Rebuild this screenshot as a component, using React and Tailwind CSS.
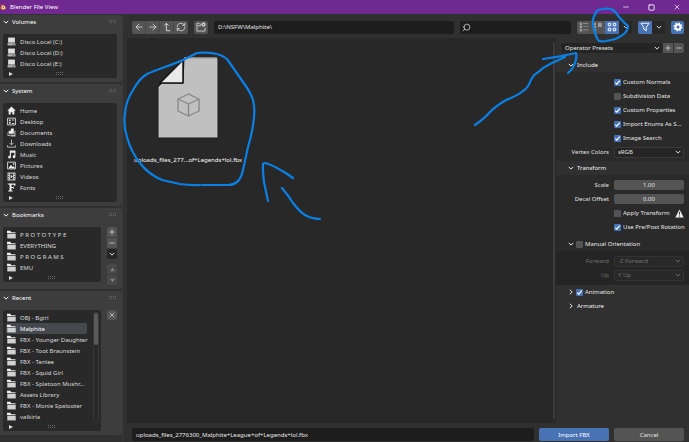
import { useState } from "react";
import { ArrowLeft, ArrowRight, RefreshCw, Search, X, Minus, Plus, Square } from "lucide-react";

function ChevronDown({ className = "" }) {
  return (
    <svg viewBox="0 0 8 8" className={`h-[6px] w-[6px] shrink-0 ${className}`} fill="none" stroke="currentColor" strokeWidth="1.3">
      <path d="M1 2.5 4 5.5 7 2.5" />
    </svg>
  );
}

function Grip() {
  return (
    <svg viewBox="0 0 8 4" className="h-[4px] w-[8px] shrink-0" fill="#6a6a6a">
      {[0, 2, 4, 6].map((x) => (
        <g key={x}>
          <rect x={x} y="0" width="1" height="1" />
          <rect x={x} y="2" width="1" height="1" />
        </g>
      ))}
    </svg>
  );
}

const drawings = {
  drive: (
    <>
      <path fill="#dedede" d="M2 1h12v9H2z" />
      <path fill="#b5b5b5" d="M1 11h14v4H1z" />
      <path fill="#333" d="M10 12.5h3v1h-3z" />
    </>
  ),
  home: <path fill="#eee" d="M8 1 0.5 8.5H3V15h3.5v-4h3v4H13V8.5h2.5z" />,
  desktop: (
    <>
      <path fill="none" stroke="#ddd" strokeWidth="1.6" d="M1 2h14v12H1z" />
      <path fill="#ddd" d="M3.5 4.5h3v3h-3zM3.5 9h3v3h-3zM8.5 4.5h4V6h-4zM9 10.5h4v2H9z" />
    </>
  ),
  documents: (
    <>
      <path fill="#eee" d="M7 1h5v9H3V5h4z" />
      <path fill="#bbb" d="M13 5h2v10H6v-3h7zM1 8h1v4h3v2H1z" />
    </>
  ),
  downloads: <path fill="none" stroke="#ccc" strokeWidth="1.5" d="M8 1v9M4.5 7 8 10.5 11.5 7M1 11v3.5h14V11" />,
  music: <path fill="#eee" d="M5 1h10v11a2.5 2.5 0 1 1-2-2.4V5H7v7.500a2.5 2.5 0 1 1-2-2.4z" />,
  pictures: (
    <>
      <path fill="none" stroke="#ddd" strokeWidth="1.6" d="M1 2h14v12H1z" />
      <path fill="#eee" d="M2.5 13 7 6.5l3 4L11.5 9l3 4zM10.5 4H13v2.500h-2.5z" />
    </>
  ),
  videos: (
    <>
      <path fill="#ddd" d="M1 1h14v14H1z" />
      <path fill="#333" d="M5 2.5h6v11H5zM2 3h1.5v2H2zM2 7h1.5v2H2zM2 11h1.5v2H2zM12.5 3H14v2h-1.5zM12.5 7H14v2h-1.5zM12.5 11H14v2h-1.5z" />
      <path fill="#eee" d="m6.5 5 4 3-4 3z" />
    </>
  ),
  fonts: <path fill="#eee" d="M1 1h14v4h-1.5L12 3H8v4.2h2.5L11 6h1v4.500h-1L10.5 9H8v4l2 .8V15H2v-1.2L4.500 13V3L1 2z" />,
  folder: (
    <>
      <path fill="#eee" d="M0 1.500h6L7.500 4H15v1.500H0z" />
      <path fill="#d2d2d2" d="M0.500 6.500h15V15h-15z" />
    </>
  ),
};

function Icon({ name }) {
  return (
    <svg viewBox="0 0 16 16" className="h-[9px] w-[9px] shrink-0">
      {drawings[name]}
    </svg>
  );
}

function BoxFooter() {
  return (
    <div className="grid h-[9px] grid-cols-3 items-center px-1">
      <svg viewBox="0 0 6 6" className="ml-[2px] h-[4px] w-[4px]" fill="#ddd">
        <path d="M0 0 6 3 0 6z" />
      </svg>
      <span className="justify-self-center">
        <Grip />
      </span>
    </div>
  );
}

function PlaceList({ items, scroll = false }) {
  return (
    <div className="min-w-0 flex-1 rounded-[2px] bg-[#292929] pt-[2px]">
      <div className="flex">
        <ul className="min-w-0 flex-1 px-[3px]">
          {items.map(([icon, label, selected]) => (
            <li key={label}>
              <button
                className={`flex h-[11px] w-full items-center gap-1 rounded-[2px] pl-[1px] text-left whitespace-nowrap ${
                  selected ? "bg-[#45484d] text-white" : "text-[#dadada]"
                }`}
              >
                <Icon name={icon} />
                <span>{label}</span>
              </button>
            </li>
          ))}
        </ul>
        {scroll && (
          <div className="mr-[2px] ml-[3px] w-[6px] rounded-full border border-[#383838]">
            <div className="h-8 rounded-full bg-[#5a5a5a]" />
          </div>
        )}
      </div>
      <BoxFooter />
    </div>
  );
}

function SidePanel({ title, children }) {
  return (
    <section className="rounded-r-[3px] bg-[#3d3d3d] pr-[5px] pb-1 pl-[3px]">
      <header className="mb-[5px] flex h-[14px] items-center justify-between">
        <button className="flex items-center gap-[3px] text-white">
          <ChevronDown />
          {title}
        </button>
        <Grip />
      </header>
      <div className="flex items-start gap-[6px]">{children}</div>
    </section>
  );
}

const smallButton = "flex h-[10px] w-[10px] items-center justify-center bg-[#545454] text-[#e6e6e6]";

function SideBar() {
  return (
    <aside className="flex w-[122px] shrink-0 flex-col gap-[2px] pt-[1px]">
      <SidePanel title="Volumes">
        <PlaceList
          items={[
            ["drive", "Disco Local (C:)"],
            ["drive", "Disco Local (D:)"],
            ["drive", "Disco Local (E:)"],
          ]}
        />
      </SidePanel>
      <SidePanel title="System">
        <PlaceList
          items={[
            ["home", "Home"],
            ["desktop", "Desktop"],
            ["documents", "Documents"],
            ["downloads", "Downloads"],
            ["music", "Music"],
            ["pictures", "Pictures"],
            ["videos", "Videos"],
            ["fonts", "Fonts"],
          ]}
        />
      </SidePanel>
      <SidePanel title="Bookmarks">
        <PlaceList
          items={[
            ["folder", "P R O T O T Y P E"],
            ["folder", "EVERYTHING"],
            ["folder", "P R O G R A M S"],
            ["folder", "EMU"],
          ]}
        />
        <div className="flex flex-col gap-[5px]">
          <div className="flex flex-col gap-px">
            <button aria-label="Add bookmark" className={`${smallButton} rounded-t-[2px]`}>
              <Plus size={8} />
            </button>
            <button aria-label="Remove bookmark" className={smallButton}>
              <Minus size={8} />
            </button>
            <button aria-label="Bookmark options" className="flex h-[10px] w-[10px] items-center justify-center rounded-b-[2px] bg-[#252525] text-[#e6e6e6]">
              <ChevronDown />
            </button>
          </div>
          <div className="flex flex-col gap-px">
            <button aria-label="Move up" disabled className="flex h-[10px] w-[10px] items-center justify-center rounded-t-[2px] bg-[#484848]">
              <svg viewBox="0 0 6 6" className="h-[5px] w-[5px]" fill="#808080">
                <path d="M0 5 3 1l3 4z" />
              </svg>
            </button>
            <button aria-label="Move down" disabled className="flex h-[10px] w-[10px] items-center justify-center rounded-b-[2px] bg-[#484848]">
              <svg viewBox="0 0 6 6" className="h-[5px] w-[5px]" fill="#808080">
                <path d="M0 1h6L3 5z" />
              </svg>
            </button>
          </div>
        </div>
      </SidePanel>
      <SidePanel title="Recent">
        <PlaceList
          scroll
          items={[
            ["folder", "OBJ - Bgirl"],
            ["folder", "Malphite", true],
            ["folder", "FBX - Younger Daughter"],
            ["folder", "FBX - Toot Braunstein"],
            ["folder", "FBX - Tenlee"],
            ["folder", "FBX - Squid Girl"],
            ["folder", "FBX - Splatoon Mushr..."],
            ["folder", "Assets Library"],
            ["folder", "FBX - Monie Spalooter"],
            ["folder", "valkiria"],
          ]}
        />
        <button aria-label="Clear recent" className={`${smallButton} rounded-[2px]`}>
          <X size={8} />
        </button>
      </SidePanel>
    </aside>
  );
}

const tool = "flex h-[13px] w-[14px] items-center justify-center";
const narrowTool = "flex h-[13px] w-[13px] items-center justify-center";

function ToolBar() {
  return (
    <div className="flex h-[23px] items-center gap-[6px] pt-px pr-[5px] pl-[5px] text-[#dcdcdc]">
      <div className="flex overflow-hidden rounded-[2px] bg-[#545454]">
        <button aria-label="Back" className={`${tool} border-r border-[#484848]`}>
          <ArrowLeft size={10} />
        </button>
        <button aria-label="Forward" className={`${tool} border-r border-[#484848]`}>
          <ArrowRight size={10} />
        </button>
        <button aria-label="Parent directory" className={`${tool} border-r border-[#484848]`}>
          <svg viewBox="0 0 16 16" className="h-[10px] w-[10px]" fill="none" stroke="currentColor" strokeWidth="1.5">
            <path d="M3.5 5.5 7 2l3.500 3.500M7 2v12h6" />
          </svg>
        </button>
        <button aria-label="Refresh" className={tool}>
          <RefreshCw size={10} />
        </button>
      </div>
      <button aria-label="New folder" className={`${tool} rounded-[2px] bg-[#545454]`}>
        <svg viewBox="0 0 16 16" className="h-[10px] w-[10px]" fill="none" stroke="#d6d6d6" strokeWidth="1.3">
          <path d="M8 3.500H6L5 2H1.500v12.500h13V9M1.500 6H8" />
          <circle cx="12" cy="4" r="2.8" fill="#eee" />
          <path d="M12 2.500v3M10.500 4h3" stroke="#444" strokeWidth="1" />
        </svg>
      </button>
      <input
        aria-label="Path"
        defaultValue="D:\NSFW\Malphite\"
        className="h-[13px] min-w-0 flex-[240] rounded-[2px] bg-[#1d1d1d] px-1 text-[#e6e6e6] outline-none"
      />
      <label className="flex h-[13px] min-w-0 flex-[111] items-center rounded-[2px] bg-[#1d1d1d] px-[2px]">
        <Search size={9} className="shrink-0 -scale-x-100" />
        <input aria-label="Search" className="w-full min-w-0 outline-none" />
      </label>
      <div className="flex rounded-[2px] bg-[#282828]">
        <button aria-label="Vertical list" className={`${tool} rounded-l-[2px] border-r border-[#484848] bg-[#545454]`}>
          <svg viewBox="0 0 16 16" className="h-[10px] w-[10px]" fill="#9a9a9a">
            <path d="M1 1h4v4H1zM1 6h4v4H1zM1 11h4v4H1zM6.500 2H15v1H6.500zM6.500 7H15v1H6.500zM6.500 12H15v1H6.500z" />
          </svg>
        </button>
        <button aria-label="Horizontal list" className={`${tool} bg-[#545454]`}>
          <svg viewBox="0 0 16 16" className="h-[10px] w-[10px]" fill="#9a9a9a">
            <path d="M1 1h4v4H1zM1 6h4v4H1zM1 11h4v4H1zM8 1h6v7H8z" />
          </svg>
        </button>
        <button aria-label="Thumbnails" className={`${tool} bg-[#4772b3] text-white`}>
          <svg viewBox="0 0 16 16" className="h-[10px] w-[10px]" fill="none" stroke="currentColor" strokeWidth="1.5">
            <path d="M2 2h4v4H2zM10 2h4v4h-4zM2 10h4v4H2zM10 10h4v4h-4z" />
          </svg>
        </button>
        <button aria-label="Display settings" className={narrowTool}>
          <ChevronDown />
        </button>
      </div>
      <div className="flex rounded-[2px] bg-[#282828]">
        <button aria-label="Filter" className={`${tool} rounded-l-[2px] bg-[#4772b3] text-white`}>
          <svg viewBox="0 0 16 16" className="h-[10px] w-[10px]" fill="none" stroke="currentColor" strokeWidth="1.5">
            <path d="M1.500 2h13L10 8.500V14l-4-2.500v-3z" />
          </svg>
        </button>
        <button aria-label="Filter settings" className={narrowTool}>
          <ChevronDown />
        </button>
      </div>
      <button aria-label="Options" className={`${narrowTool} rounded-[2px] bg-[#4772b3] text-white`}>
        <svg viewBox="0 0 16 16" className="h-[10px] w-[10px]" fill="none" stroke="currentColor">
          <circle cx="8" cy="8" r="4" strokeWidth="3" />
          <circle cx="8" cy="8" r="6" strokeWidth="2.5" strokeDasharray="2.36 2.35" />
        </svg>
      </button>
    </div>
  );
}

function Files() {
  return (
    <main className="min-w-0 flex-1 bg-[#282828]">
      <div className="flex h-full">
        <div className="min-w-0 flex-1 pt-[19px] pl-[5px]">
          <figure className="flex w-[112px] flex-col items-center text-white">
            <svg viewBox="0 0 62 84" className="h-[84px] w-[62px]">
              <path d="M27 1h34v80H1V30l4-4h21z" fill="#c0c0c0" stroke="#1a1a1a" />
              <path d="M27 1h33" stroke="#e8e8e8" />
              <path d="M26 3v23H3z" fill="#e9e9e9" stroke="#151515" strokeWidth="1.5" />
              <path
                d="M31.500 37 42 42v12l-10.500 5L21 54V42zM21 42l10.500 5L42 42M31.500 47v12"
                fill="none"
                stroke="#858585"
                strokeWidth="1.3"
                strokeLinejoin="round"
              />
            </svg>
            <figcaption className="mt-[14px] leading-[10px] whitespace-nowrap">uploads_files_277...of+Legends+lol.fbx</figcaption>
          </figure>
        </div>
        <div className="my-1 mr-px w-[2px] rounded-full bg-[#3c3c3c]" />
      </div>
    </main>
  );
}

function Check({ label, checked = false }) {
  const [on, setOn] = useState(checked);
  return (
    <label className="flex h-[14px] items-center gap-[2px] whitespace-nowrap text-[#e6e6e6]">
      <span className="grid shrink-0">
        <input
          type="checkbox"
          checked={on}
          onChange={() => setOn(!on)}
          className="col-start-1 row-start-1 h-[7px] w-[7px] appearance-none rounded-[1px] bg-[#545454] checked:bg-[#4772b3]"
        />
        {on && (
          <svg viewBox="0 0 7 7" className="pointer-events-none col-start-1 row-start-1 h-[7px] w-[7px]" fill="none" stroke="#fff" strokeWidth="1.2">
            <path d="M1.3 3.7 2.8 5.2 5.8 1.6" />
          </svg>
        )}
      </span>
      <span>{label}</span>
    </label>
  );
}

function Choice({ id, label, value, disabled = false }) {
  return (
    <div className={`grid h-[14px] grid-cols-[53px_1fr] items-center gap-[5px] ${disabled ? "text-[#707070]" : "text-[#e0e0e0]"}`}>
      <label htmlFor={id} className="text-right">
        {label}
      </label>
      <span
        className={`flex h-[11px] items-center rounded-[2px] border pr-[2px] pl-[3px] ${
          disabled ? "border-[#333] bg-[#282828]" : "border-[#3a3a3a] bg-[#252525]"
        }`}
      >
        <select id={id} disabled={disabled} className="min-w-0 flex-1 appearance-none leading-[9px] outline-none">
          <option>{value}</option>
        </select>
        <ChevronDown />
      </span>
    </div>
  );
}

function NumberField({ id, label, value }) {
  return (
    <div className="grid h-[14px] grid-cols-[53px_1fr] items-center gap-[5px] text-[#e0e0e0]">
      <label htmlFor={id} className="text-right">
        {label}
      </label>
      <input id={id} defaultValue={value} className="h-[10px] w-full min-w-0 rounded-[2px] bg-[#545454] text-center outline-none" />
    </div>
  );
}

function SectionHead({ title, closed = false }) {
  return (
    <button className="flex h-[14px] items-center gap-[3px] pl-3 text-[#f0f0f0]">
      <ChevronDown className={closed ? "-rotate-90" : ""} />
      {title}
    </button>
  );
}

function ToggleHead({ title, checked = false, closed = false }) {
  return (
    <div className="flex h-[14px] items-center gap-[2px] pl-3 text-[#f0f0f0]">
      <button aria-label={`Expand ${title}`} className="flex">
        <ChevronDown className={closed ? "-rotate-90" : ""} />
      </button>
      <Check label={title} checked={checked} />
    </div>
  );
}

function Operator() {
  return (
    <aside className="w-[133px] shrink-0 bg-[#303030] pt-[5px]">
      <div className="flex gap-px pr-[5px] pl-[5px]">
        <span className="flex h-[10px] min-w-0 flex-1 items-center rounded-l-[2px] bg-[#252525] pr-[2px] pl-1 text-[#e6e6e6]">
          <select aria-label="Operator Presets" className="min-w-0 flex-1 appearance-none leading-[10px] outline-none">
            <option>Operator Presets</option>
          </select>
          <ChevronDown />
        </span>
        <button aria-label="Add preset" className={smallButton}>
          <Plus size={8} />
        </button>
        <button aria-label="Remove preset" className={`${smallButton} rounded-r-[2px]`}>
          <Minus size={8} />
        </button>
      </div>
      <section className="mt-[5px]">
        <SectionHead title="Include" />
        <div className="bg-[#2a2a2a] pt-[3px] pr-[5px] pb-[2px]">
          <div className="pl-[58px]">
            <Check label="Custom Normals" checked />
            <Check label="Subdivision Data" />
            <Check label="Custom Properties" checked />
            <Check label="Import Enums As S..." checked />
            <Check label="Image Search" checked />
          </div>
          <Choice id="vertex-colors" label="Vertex Colors" value="sRGB" />
        </div>
      </section>
      <section>
        <SectionHead title="Transform" />
        <div className="bg-[#2a2a2a] pt-[3px] pr-[5px]">
          <NumberField id="scale" label="Scale" value="1.00" />
          <NumberField id="decal" label="Decal Offset" value="0.00" />
          <div className="flex items-center justify-between pl-[58px]">
            <Check label="Apply Transform" />
            <svg viewBox="0 0 16 16" className="h-[9px] w-[9px] shrink-0">
              <path d="M8 1 15.500 15H.5z" fill="#eee" />
              <path d="M8 5v5M8 11.500v2" stroke="#222" strokeWidth="1.6" />
            </svg>
          </div>
          <div className="pl-[58px]">
            <Check label="Use Pre/Post Rotation" checked />
          </div>
        </div>
        <div className="bg-[#2a2a2a] pt-[3px]">
          <ToggleHead title="Manual Orientation" />
          <div className="bg-[#252525] py-[3px] pr-[5px]">
            <Choice id="forward" label="Forward" value="-Z Forward" disabled />
            <Choice id="up" label="Up" value="Y Up" disabled />
          </div>
        </div>
      </section>
      <ToggleHead title="Animation" checked closed />
      <SectionHead title="Armature" closed />
    </aside>
  );
}

function TitleBar() {
  return (
    <header className="flex h-[14px] items-center justify-between bg-[#702990] pr-2 text-white">
      <div className="flex items-center gap-[3px]">
        <svg viewBox="0 0 16 14" className="h-[8px] w-[7px]">
          <path d="M1 5 6 1l6 4 2 4-3 4H5L1 10 0 9l4-3z" fill="#f08a1c" />
          <circle cx="8" cy="8.5" r="3" fill="#fff" />
          <circle cx="8" cy="8.5" r="1.6" fill="#1d5a94" />
        </svg>
        <h1>Blender File View</h1>
      </div>
      <div className="flex items-center gap-[18px]">
        <button aria-label="Minimize">
          <Minus size={8} />
        </button>
        <button aria-label="Maximize">
          <Square size={7} strokeWidth={3} />
        </button>
        <button aria-label="Close">
          <X size={8} />
        </button>
      </div>
    </header>
  );
}

function Annotations() {
  return (
    <svg
      viewBox="0 0 689 442"
      className="pointer-events-none absolute top-0 left-0 h-[442px] w-[689px]"
      fill="none"
      stroke="#0a80e4"
      strokeWidth="2.2"
      strokeLinecap="round"
      strokeLinejoin="round"
    >
      <path d="M200 185Q190 185.500 180 184L162 180Q148 174 140 163Q131 152 127 137Q123 125 125 113Q126 101 133 90Q139 79 147 74C158 69 172 65 183 60L197 53Q207 52 217 54Q222 55 227 59L243 82Q251 93 253 100Q255 108 254 117Q253 130 248 147L243 170Q241 179 237 182Q233 185 228 185H202" />
      <path d="M293 178Q285 172 277 168Q264 161 263 164Q262.500 170 264 182L268 201M282 188Q288 195 293 203Q300 212 305 215Q312 219 320 219" />
      <path d="M597 11Q599 9 603 9Q610 8 613 10Q617 13 619 17Q624 23 628 26Q628 30 625 33Q618 39 611 40L606 41Q599 42 598 40Q596 37 595 32Q593 27 593 24Q592 18 597 11" />
      <path d="M475 125Q485 118 490 112Q496 106 506 100Q517 96 523 91Q528 88 530 82Q533 75 537 73Q542 68 550 64L565 57M543 59Q559 57 576 53Q577 57 575 63Q573 69 568 73" />
    </svg>
  );
}

export default function App() {
  return (
    <div className="relative flex min-h-screen flex-col bg-[#303030] font-['Noto_Sans','Open_Sans',sans-serif] text-[6px] leading-[10px]">
      <TitleBar />
      <div className="flex flex-1">
        <SideBar />
        <div className="flex min-w-0 flex-1 flex-col border-l border-[#3a3a3a]">
          <div className="flex min-w-0 flex-1 flex-col pt-px pl-1">
            <ToolBar />
            <div className="flex flex-1">
              <Files />
              <Operator />
            </div>
            <footer className="flex h-[19px] items-end gap-[5px] px-[5px] pb-px">
              <input
                aria-label="File name"
                defaultValue="uploads_files_2776300_Malphite+League+of+Legends+lol.fbx"
                className="h-[13px] min-w-0 flex-1 rounded-[2px] bg-[#1d1d1d] px-1 text-[#e6e6e6] outline-none"
              />
              <button className="h-[13px] w-[70px] rounded-[2px] bg-[#4772b3] text-white">Import FBX</button>
              <button className="h-[13px] w-[70px] rounded-[2px] bg-[#545454] text-[#e6e6e6]">Cancel</button>
            </footer>
          </div>
        </div>
      </div>
      <Annotations />
    </div>
  );
}
